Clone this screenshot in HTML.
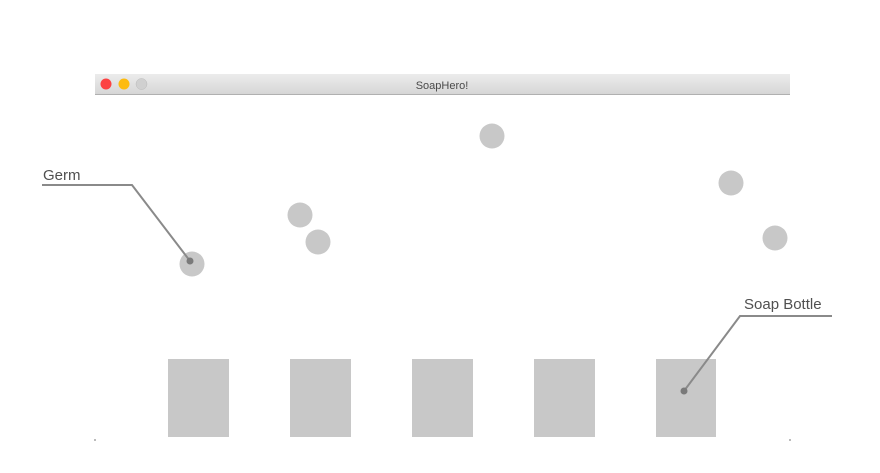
<!DOCTYPE html>
<html><head><style>
body{margin:0;width:880px;height:473px;background:#fff;overflow:hidden;position:relative;font-family:"Liberation Sans",sans-serif}
</style></head><body>
<svg width="880" height="473" style="position:absolute;left:0;top:0">
<defs><linearGradient id="g" x1="0" y1="0" x2="0" y2="1"><stop offset="0" stop-color="#ececec"/><stop offset="1" stop-color="#d6d6d6"/></linearGradient></defs>
<rect x="95" y="74" width="695" height="20" fill="url(#g)"/>
<line x1="95" y1="94.5" x2="790" y2="94.5" stroke="#b0b0b0"/>
<circle cx="106" cy="84" r="5.5" fill="#fc4242"/>
<circle cx="124" cy="84" r="5.5" fill="#fdbb0f"/>
<circle cx="141.5" cy="84" r="5.5" fill="#d0d0d0" stroke="#bbb" stroke-width="0.5"/>
<text x="442" y="89" font-size="11" fill="#4a4a4a" text-anchor="middle">SoapHero!</text>
<g fill="#c8c8c8">
<circle cx="192" cy="264" r="12.5"/>
<circle cx="300" cy="215" r="12.5"/>
<circle cx="318" cy="242" r="12.5"/>
<circle cx="492" cy="136" r="12.5"/>
<circle cx="731" cy="183" r="12.5"/>
<circle cx="775" cy="238" r="12.5"/>
<rect x="168" y="359" width="61" height="78"/>
<rect x="290" y="359" width="61" height="78"/>
<rect x="412" y="359" width="61" height="78"/>
<rect x="534" y="359" width="61" height="78"/>
<rect x="656" y="359" width="60" height="78"/>
</g>
<rect x="94" y="439" width="2" height="2" fill="#bbb"/>
<rect x="789" y="439" width="2" height="2" fill="#bbb"/>
<polyline points="42,185 132,185 190,261" fill="none" stroke="#8a8a8a" stroke-width="2"/>
<circle cx="190" cy="261" r="3.5" fill="#7a7a7a"/>
<polyline points="684,391 740,316 832,316" fill="none" stroke="#8a8a8a" stroke-width="2"/>
<circle cx="684" cy="391" r="3.5" fill="#7a7a7a"/>
<text x="43" y="180" font-size="15" fill="#505050">Germ</text>
<text x="744" y="309" font-size="15" fill="#505050">Soap Bottle</text>
</svg>
</body></html>
